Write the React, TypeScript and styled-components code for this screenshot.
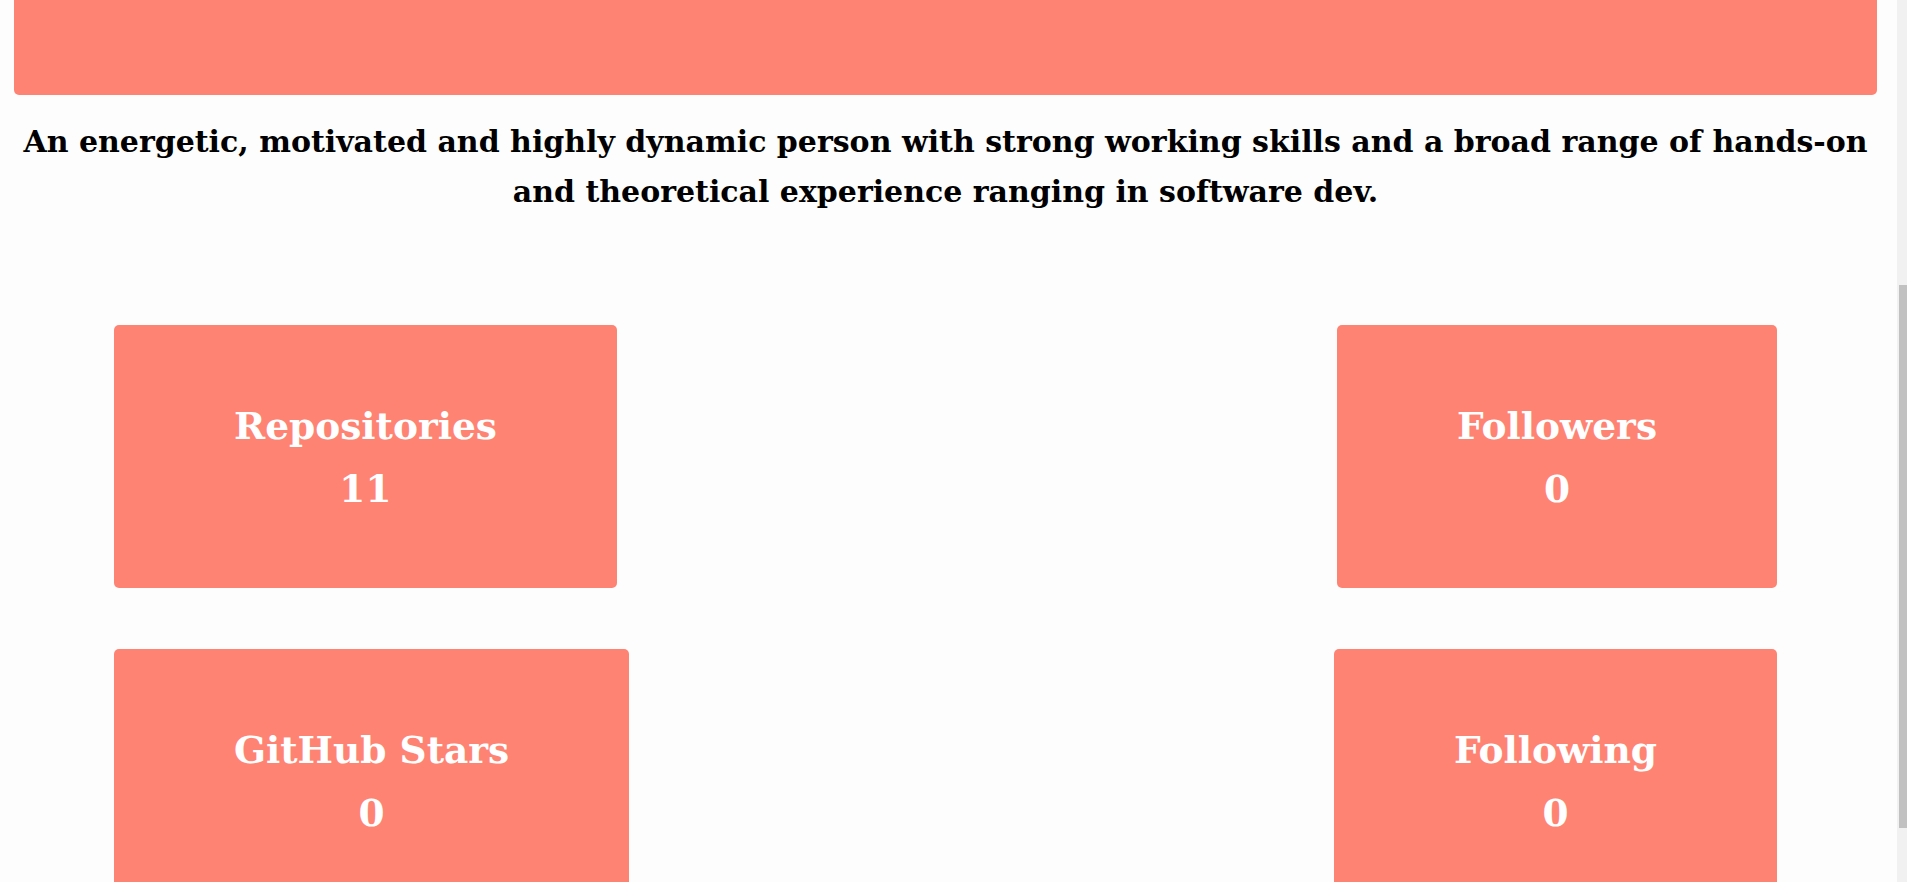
import { useLayoutEffect } from 'react';
import styled, { createGlobalStyle } from 'styled-components';

const SALMON = '#ff8373';

const GlobalStyle = createGlobalStyle`
  html, body {
    margin: 0;
    padding: 0;
    background-color: #fdfdfd;
  }

  body {
    font-family: 'DejaVu Serif', 'Liberation Serif', serif;
    font-weight: 700;
  }
`;

const Page = styled.div`
  padding: 0 30px 80px 14px;
`;

const Banner = styled.header`
  display: flex;
  align-items: center;
  justify-content: center;
  box-sizing: border-box;
  height: 260px;
  padding-top: 18px;
  background-color: ${SALMON};
  border-radius: 0 0 5px 5px;

  h1 {
    margin: 0;
    color: #fff;
    font-size: 40px;
  }
`;

const About = styled.p`
  margin: 22px 0 0;
  text-align: center;
  color: #000;
  font-size: 30px;
  line-height: 50px;
`;

const Stats = styled.section`
  display: flex;
  flex-direction: column;
  gap: 61px;
  padding: 108px 100px 0;
`;

const StatRow = styled.div`
  display: flex;
  justify-content: space-between;
`;

const StatCard = styled.div`
  padding: 70px 120px 67px;
  background-color: ${SALMON};
  border-radius: 5px;
  color: #fff;
  text-align: center;
  font-size: 37.5px;
  line-height: 63px;

  h3, p {
    margin: 0;
    font-size: inherit;
  }
`;

// the page is shot scrolled, so the browser's scrollbar is drawn by hand
const ScrollTrack = styled.div`
  position: fixed;
  top: 0;
  right: 0;
  width: 10px;
  height: 100vh;
  background-color: #f1f1f1;
`;

const ScrollThumb = styled.div`
  position: absolute;
  top: 285px;
  left: 2px;
  right: 0;
  height: 543px;
  background-color: #c1c1c1;
`;

const rows = [
  [
    { label: 'Repositories', value: 11 },
    { label: 'Followers', value: 0 },
  ],
  [
    { label: 'GitHub Stars', value: 0 },
    { label: 'Following', value: 0 },
  ],
];

const App = () => {
  useLayoutEffect(() => {
    window.scrollTo(0, 165);
  }, []);

  return (
    <>
      <GlobalStyle />
      <Page>
        <Banner>
          <h1>GitHub Summary</h1>
        </Banner>
        <About>
          An energetic, motivated and highly dynamic person with strong working
          skills and a broad range of hands-on and theoretical experience
          ranging in software dev.
        </About>
        <Stats>
          {rows.map((row, i) => (
            <StatRow key={i}>
              {row.map((stat) => (
                <StatCard key={stat.label}>
                  <h3>{stat.label}</h3>
                  <p>{stat.value}</p>
                </StatCard>
              ))}
            </StatRow>
          ))}
        </Stats>
      </Page>
      <ScrollTrack>
        <ScrollThumb />
      </ScrollTrack>
    </>
  );
};

export default App;
